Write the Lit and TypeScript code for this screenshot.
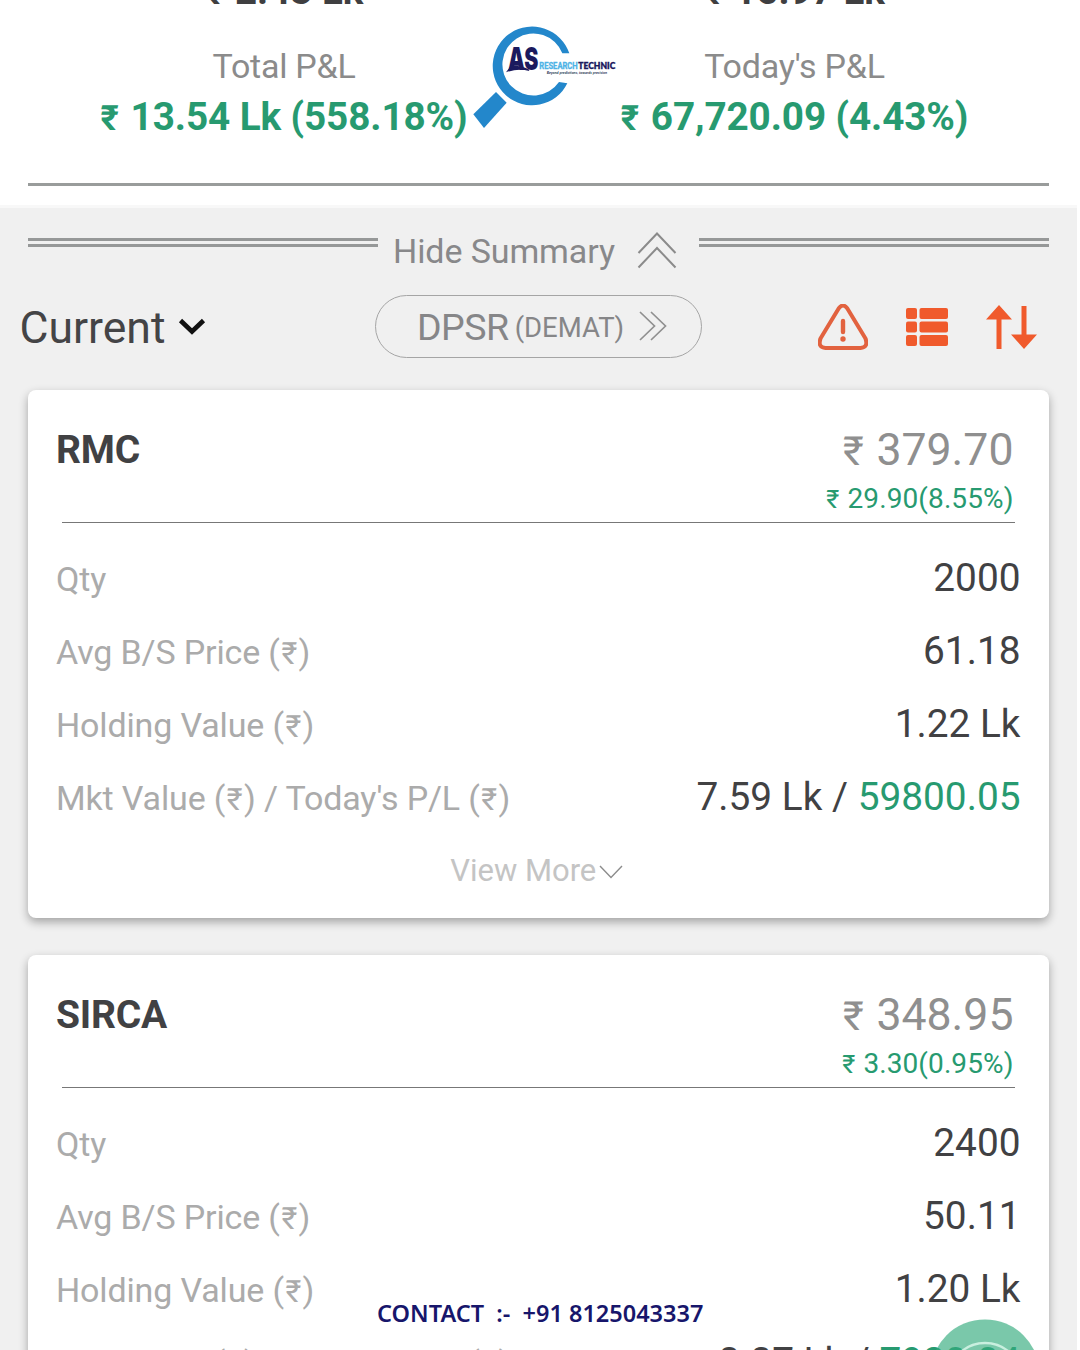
import { LitElement, html, css, svg } from "lit";
import { customElement, property } from "lit/decorators.js";

interface Holding {
  name: string;
  price: string;
  change: string;
  qty: string;
  avg: string;
  holding: string;
  market: string;
  today: string;
}

const HOLDINGS: Holding[] = [
  {
    name: "RMC",
    price: "379.70",
    change: "29.90(8.55%)",
    qty: "2000",
    avg: "61.18",
    holding: "1.22 Lk",
    market: "7.59 Lk",
    today: "59800.05",
  },
  {
    name: "SIRCA",
    price: "348.95",
    change: "3.30(0.95%)",
    qty: "2400",
    avg: "50.11",
    holding: "1.20 Lk",
    market: "8.37 Lk",
    today: "7920.04",
  },
];

/* The currency sign is set a little smaller than the digits beside it. */
const rupee = html`<span class="rs">₹</span>`;
const rupeeStyle = css`
  .rs { font-size: 0.9em; line-height: 1; margin: 0 0.05em; }
`;

@customElement("brand-logo")
export class BrandLogo extends LitElement {
  static styles = css`
    :host { display: block; }
    svg { display: block; }
    .mono { font: 900 94px Inter, sans-serif; fill: #1b1a5e; }
    .research { font: 700 25px Roboto, sans-serif; fill: #4fb3e6; stroke: #4fb3e6; stroke-width: 1; }
    .technic { font: 800 25px Lato, sans-serif; fill: #1b1a5e; stroke: #1b1a5e; stroke-width: 0.8; }
    .tag { font: italic 700 9.5px Lato, sans-serif; fill: #2b3a55; }
  `;
  render() {
    return html`<svg width="180" height="150" viewBox="0 0 540 450">
      <path fill="#2387cb" d="M328 160A118 118 0 1 0 322 250L297 246A93 93 0 1 1 307 160Z" />
      <path fill="#2387cb" d="M108 276L140 308L72 384L40 343Z" />
      <text class="mono" x="144" y="211" textLength="91" lengthAdjust="spacingAndGlyphs">AS</text>
      <path fill="#1b1a5e" d="M138 217L152 198Q180 195 206 208L208 213Q174 204 138 217Z" />
      <text class="research" x="238" y="206" textLength="115" lengthAdjust="spacingAndGlyphs">RESEARCH</text>
      <text class="technic" x="355" y="208" textLength="111" lengthAdjust="spacingAndGlyphs">TECHNIC</text>
      <text class="tag" x="260" y="222" textLength="181" lengthAdjust="spacingAndGlyphs">Beyond predictions, towards precision</text>
    </svg>`;
  }
}

@customElement("holding-card")
export class HoldingCard extends LitElement {
  @property({ attribute: false }) data!: Holding;

  static styles = [
    rupeeStyle,
    css`
      :host {
        display: block;
        box-sizing: border-box;
        height: 528px;
        padding: 30px 28.5px 0 28px;
        background: #fff;
        border-radius: 8px;
        box-shadow: 0 4px 10px rgba(0, 0, 0, 0.32);
        color: #414143;
      }
      .head {
        display: flex;
        justify-content: space-between;
        box-sizing: border-box;
        height: 102px;
        margin-right: 7px;
      }
      .name { font-size: 39px; font-weight: 700; line-height: 61px; letter-spacing: -0.2px; }
      .quote { display: flex; flex-direction: column; align-items: flex-end; }
      .price { font-size: 44.6px; line-height: 60px; color: #8f8f8f; }
      .change { font-size: 28px; line-height: 37px; color: #279a70; letter-spacing: 0.1px; }
      .quote .rs { margin: 0 0.04em 0 0; }
      .rule { height: 1px; margin: 0 6px 18px; background: #777; }
      .row {
        display: flex;
        justify-content: space-between;
        align-items: baseline;
        height: 73px;
        line-height: 73px;
        white-space: nowrap;
      }
      .label { font-size: 34px; color: #ababab; letter-spacing: -0.15px; }
      .value { font-size: 38.8px; }
      .gain { color: #279a70; }
      .more {
        display: flex;
        justify-content: center;
        align-items: center;
        gap: 3px;
        height: 76px;
        font-size: 31px;
        color: #c4c4c4;
        margin-right: 3px;
      }
      .more svg { margin-top: 3px; }
    `,
  ];

  render() {
    const d = this.data;
    return html`
      <div class="head">
        <div class="name">${d.name}</div>
        <div class="quote">
          <div class="price">${rupee} ${d.price}</div>
          <div class="change">${rupee} ${d.change}</div>
        </div>
      </div>
      <div class="rule"></div>
      <div class="row"><span class="label">Qty</span><span class="value">${d.qty}</span></div>
      <div class="row"><span class="label">Avg B/S Price (${rupee})</span><span class="value">${d.avg}</span></div>
      <div class="row"><span class="label">Holding Value (${rupee})</span><span class="value">${d.holding}</span></div>
      <div class="row">
        <span class="label">Mkt Value (${rupee}) / Today's P/L (${rupee})</span>
        <span class="value">${d.market} / <span class="gain">${d.today}</span></span>
      </div>
      <div class="more">
        <span>View More</span>
        <svg width="24" height="14" viewBox="0 0 24 14" fill="none" stroke="#8c8c8c" stroke-width="1.4">
          <path d="M1 1L12 12.5L23 1" />
        </svg>
      </div>
    `;
  }
}

const warning = svg`
  <path d="M20.8 4.2Q25 -1.2 29.2 4.2L47.5 34.5Q50.5 43.6 42.5 44H7.5Q-0.5 43.6 2.5 34.5Z" fill="none" stroke="#e2623f" stroke-width="4" stroke-linejoin="round" />
  <path d="M25 17V28" stroke="#e2623f" stroke-width="4.4" stroke-linecap="round" />
  <circle cx="25" cy="35" r="2.7" fill="#e2623f" />
`;

@customElement("app-root")
export class AppRoot extends LitElement {
  static styles = [
    rupeeStyle,
    css`
      :host {
        display: block;
        position: relative;
        width: 1080px;
        height: 1350px;
        overflow: hidden;
        background: #fff;
        font-family: Roboto, "Noto Sans", sans-serif;
      }
      .page { width: 1077px; }
      .summary { box-sizing: border-box; height: 205px; padding: 0 28px; overflow: hidden; }
      .totals { display: grid; grid-template-columns: 1fr 1fr; height: 183px; border-bottom: 3px solid #999c9b; }
      .total { display: flex; flex-direction: column; align-items: center; white-space: nowrap; padding-left: 1.5px; }
      .top { font-size: 38.5px; font-weight: 700; line-height: 40px; margin-top: -29px; color: #3f3f41; }
      .caption { font-size: 34px; line-height: 50px; margin-top: 30px; color: #8b8b8b; letter-spacing: -0.25px; }
      .pl { font-size: 38.7px; font-weight: 700; line-height: 50px; margin-top: 1px; color: #279a70; letter-spacing: -0.1px; }
      .total .rs { margin: 0 0.07em 0 0; }
      .body { box-sizing: border-box; height: 1145px; background: #f0f0f0; border-top: 3px solid #f8f8f8; }
      .toggle { display: flex; height: 87px; padding: 0 28px; color: #88888a; }
      .bars { width: 350px; box-sizing: border-box; height: 9px; margin-top: 30px; border: solid #969898; border-width: 3px 0; }
      .hide { flex: 1; display: flex; align-items: center; height: 86px; padding-left: 15px; font-size: 34px; letter-spacing: -0.1px; white-space: nowrap; }
      .hide svg { margin: -2px 0 0 22px; }
      .tools { display: flex; align-items: center; height: 62px; padding: 0 40.5px 0 19.5px; }
      .current { display: flex; align-items: center; width: 355.5px; padding-top: 3px; font-size: 44.5px; color: #444446; gap: 13px; }
      .current svg { margin-top: -1px; }
      .pill {
        display: flex;
        align-items: center;
        box-sizing: border-box;
        width: 327px;
        height: 63px;
        padding-left: 41px;
        border: 1.5px solid #a5a5a5;
        border-radius: 32px;
        color: #868688;
        white-space: nowrap;
      }
      .dpsr { font-size: 37.5px; padding-top: 1px; letter-spacing: -0.5px; }
      .demat { font-size: 27.5px; margin-left: 6px; padding-top: 2px; }
      .pill svg { margin-left: 15px; }
      .icons { display: flex; align-items: center; margin-left: auto; padding-top: 1px; gap: 37px; }
      .icons svg:first-child { margin-top: 1px; }
      .list { display: flex; flex-direction: column; gap: 37.5px; padding: 32.5px 28px 0; }
      brand-logo { position: absolute; left: 460px; top: 0; }
      .contact {
        position: absolute;
        left: 377px;
        top: 1297px;
        font: 600 23.5px/32px "Noto Sans", sans-serif;
        color: #17166b;
        white-space: pre;
      }
      .fab { position: absolute; left: 930px; top: 1319px; }
    `,
  ];

  render() {
    return html`
      <div class="page">
        <section class="summary">
          <div class="totals">
            <div class="total">
              <div class="top">${rupee} 2.43 Lk</div>
              <div class="caption">Total P&amp;L</div>
              <div class="pl">${rupee} 13.54 Lk (558.18%)</div>
            </div>
            <div class="total">
              <div class="top">${rupee} 15.97 Lk</div>
              <div class="caption">Today's P&amp;L</div>
              <div class="pl">${rupee} 67,720.09 (4.43%)</div>
            </div>
          </div>
        </section>
        <section class="body">
          <div class="toggle">
            <div class="bars"></div>
            <div class="hide">
              <span>Hide Summary</span>
              <svg width="40" height="38" viewBox="0 0 40 38" fill="none" stroke="#8b8b8b" stroke-width="2">
                <path d="M1.5 22L20 2.5L38.5 22M1.5 36.5L20 17L38.5 36.5" />
              </svg>
            </div>
            <div class="bars"></div>
          </div>
          <div class="tools">
            <div class="current">
              <span>Current</span>
              <svg width="28" height="18" viewBox="0 0 28 18" fill="none" stroke="#111" stroke-width="4.6">
                <path d="M2.5 2.5L14 13.5L25.5 2.5" />
              </svg>
            </div>
            <div class="pill">
              <span class="dpsr">DPSR</span><span class="demat">(DEMAT)</span>
              <svg width="28" height="30" viewBox="0 0 28 30" fill="none" stroke="#909090" stroke-width="1.7">
                <path d="M1 1L15.5 15L1 29M12 1L26.5 15L12 29" />
              </svg>
            </div>
            <div class="icons">
              <svg width="50" height="47" viewBox="0 0 50 47">${warning}</svg>
              <svg width="44" height="40" viewBox="0 0 44 40" fill="#f05a2c">
                <rect x="1" y="1" width="11" height="11" rx="2" /><rect x="14.5" y="1" width="28.5" height="11" rx="2" />
                <rect x="1" y="14.5" width="11" height="11" rx="2" /><rect x="14.5" y="14.5" width="28.5" height="11" rx="2" />
                <rect x="1" y="28" width="11" height="11" rx="2" /><rect x="14.5" y="28" width="28.5" height="11" rx="2" />
              </svg>
              <svg width="51" height="44" viewBox="0 0 51 44" fill="#f05a2c">
                <path d="M13 0L26 14.5H15.5V44H10.5V14.5H0Z" />
                <path d="M38 44L25 29.5H35.5V1H40.5V29.5H51Z" />
              </svg>
            </div>
          </div>
          <div class="list">${HOLDINGS.map((h) => html`<holding-card .data=${h}></holding-card>`)}</div>
        </section>
      </div>
      <brand-logo></brand-logo>
      <div class="contact">CONTACT  :-  +91 8125043337</div>
      <svg class="fab" width="110" height="31" viewBox="0 0 110 31">
        <circle cx="55" cy="55" r="54.6" fill="#35ac7e" fill-opacity="0.66" />
        <g fill="none" stroke="#c9efdf" stroke-width="2.4">
          <circle cx="55" cy="61" r="37" />
        </g>
      </svg>
    `;
  }
}
